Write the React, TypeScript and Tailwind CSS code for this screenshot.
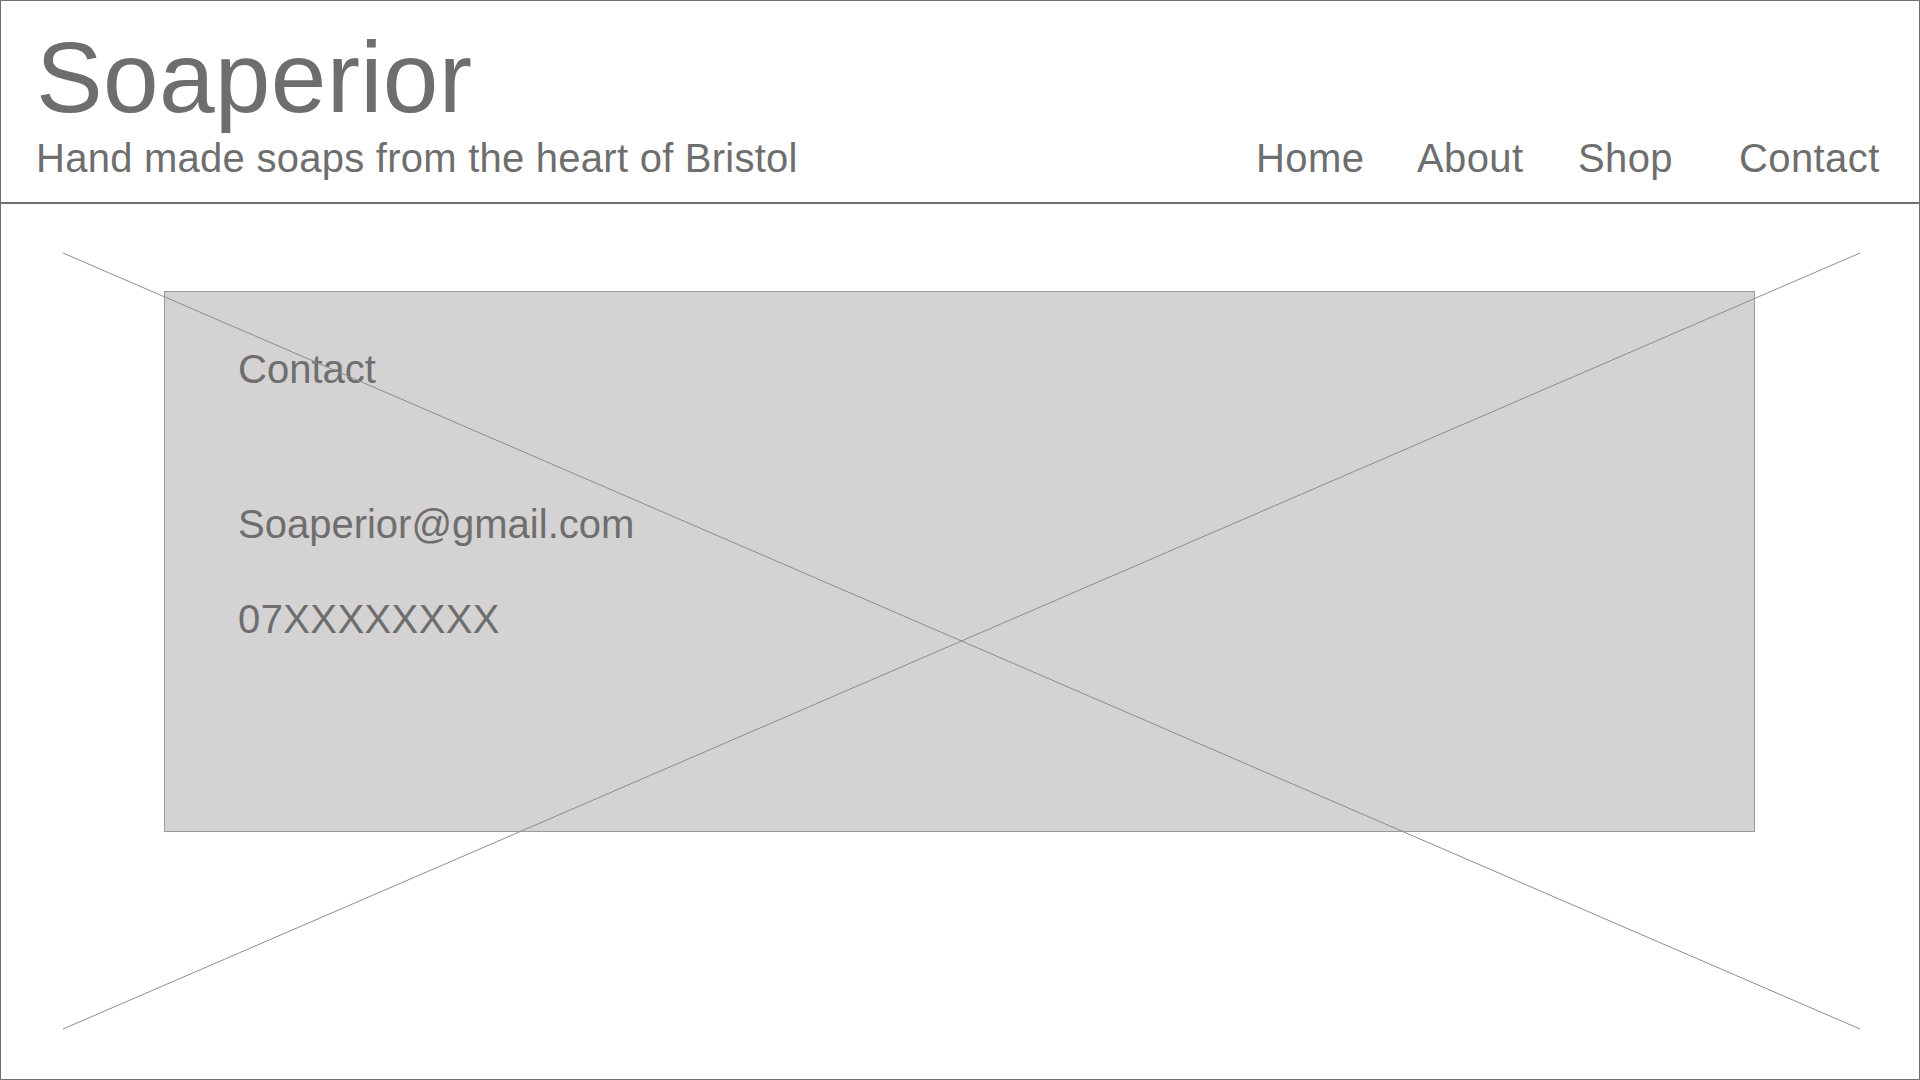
import React from "react";

export default function App() {
  return (
    <div
      className="relative w-[1920px] h-[1080px] overflow-hidden bg-white border border-[#6f6f6f] text-[#6e6e6e]"
      style={{ fontFamily: '"Liberation Sans", Arial, Helvetica, sans-serif' }}
    >
      <header className="flex items-end justify-between pl-[35px] pr-[19px] pt-[26px] pb-[24px] border-b-2 border-[#6f6f6f]">
        <div className="flex flex-col">
          <h1 className="text-[100px] leading-[100px] font-normal tracking-[0.3px]">Soaperior</h1>
          <p className="mt-[11px] text-[40px] leading-[40px] tracking-[0.25px]">Hand made soaps from the heart of Bristol</p>
        </div>
        <nav className="flex text-[40px] leading-[40px] tracking-[0.4px]">
          <a className="w-[161px]">Home</a>
          <a className="w-[161px]">About</a>
          <a className="w-[161px]">Shop</a>
          <a className="w-[161px]">Contact</a>
        </nav>
      </header>

      <main className="pt-[87px] pl-[163px]">
        <section className="w-[1591px] h-[541px] bg-[#d4d2d3] border border-[#9a9a9a] pl-[73px] pt-[57px] text-[40px] leading-[40px]">
          <h2 className="font-normal">Contact</h2>
          <p className="mt-[115px]">Soaperior@gmail.com</p>
          <p className="mt-[55px] tracking-[0.4px]">07XXXXXXXX</p>
        </section>
      </main>

      <svg
        className="absolute left-0 top-0 pointer-events-none"
        width="1920"
        height="1080"
        viewBox="0 0 1920 1080"
      >
        <line x1="62" y1="252" x2="1859" y2="1028" stroke="#8e8e8e" strokeWidth="1" />
        <line x1="62" y1="1028" x2="1859" y2="252" stroke="#8e8e8e" strokeWidth="1" />
      </svg>
    </div>
  );
}
